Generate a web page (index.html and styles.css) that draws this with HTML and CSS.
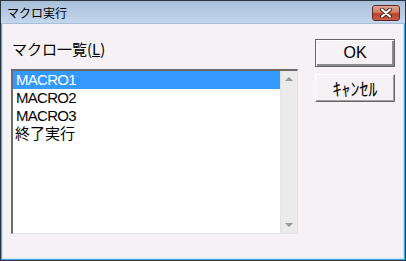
FILE: index.html
```html
<!DOCTYPE html>
<html lang="ja">
<head>
    <meta charset="UTF-8">
    <title>マクロ実行</title>
    <link rel="stylesheet" href="styles.css">
</head>
<body>
    <div class="window">
        <div class="titlebar">
            <span class="title">マクロ実行</span>
            <button class="close" aria-label="閉じる">
                <svg width="14" height="10" viewBox="0 0 14 10">
                    <path d="M3 1.5 L11 8.5 M11 1.5 L3 8.5" stroke="#4a1f1a" stroke-width="4" stroke-linecap="round"/>
                    <path d="M3 1.5 L11 8.5 M11 1.5 L3 8.5" stroke="#ffffff" stroke-width="2.2" stroke-linecap="round"/>
                </svg>
            </button>
        </div>
        <div class="frame">
            <div class="client">
                <div class="left">
                    <div class="label">マクロ一覧(<u>L</u>)</div>
                    <div class="listbox">
                        <ul class="items">
                            <li class="selected">MACRO1</li>
                            <li>MACRO2</li>
                            <li>MACRO3</li>
                            <li class="jp">終了実行</li>
                        </ul>
                        <div class="scrollbar">
                            <span class="arrow up"></span>
                            <span class="arrow down"></span>
                        </div>
                    </div>
                </div>
                <div class="buttons">
                    <button class="btn default">OK</button>
                    <button class="btn kana">ｷｬﾝｾﾙ</button>
                </div>
            </div>
        </div>
    </div>
</body>
</html>
```

FILE: styles.css
```css
* {
    box-sizing: border-box;
}

body {
    margin: 0;
    font-family: "Noto Sans CJK JP", "Noto Sans", sans-serif;
    color: #000;
}

.window {
    width: 406px;
    height: 261px;
    border: 1px solid #2a3542;
    background: linear-gradient(#a8bfd9, #c3d7ed 22px);
    display: flex;
    flex-direction: column;
}

.titlebar {
    height: 22px;
    display: flex;
    justify-content: space-between;
    align-items: flex-start;
    padding: 4px 5px 0 6px;
}

.title {
    font-size: 12px;
    line-height: 14px;
    margin-top: 1px;
}

.close {
    width: 28px;
    height: 16px;
    padding: 0;
    border: 1px solid #5b2a24;
    border-radius: 3px;
    background: linear-gradient(#e2a595, #d27a63 45%, #b9432b 55%, #c9604a);
    display: flex;
    align-items: center;
    justify-content: center;
}

.frame {
    flex: 1;
    border: 1px solid #39ade6;
    border-top: none;
}

.client {
    height: 100%;
    border: 1px solid #d3e2f1;
    border-top: 1px solid #a9bfd8;
    background: #f5f1f5;
    display: flex;
    padding: 15px 0 0 8px;
}

.left {
    width: 287px;
}

.label {
    font-size: 15px;
    line-height: 18px;
    margin: 1px 0 11px;
    padding-left: 1px;
}

.listbox {
    height: 165px;
    display: flex;
    background: #fff;
    border-top: 2px solid #6b6b6b;
    border-left: 2px solid #6b6b6b;
    border-right: 1px solid #e3e3e3;
    border-bottom: 1px solid #e3e3e3;
}

.items {
    flex: 1;
    list-style: none;
    margin: 0;
    padding: 0;
}

.items li {
    height: 18px;
    line-height: 18px;
    font-family: "Liberation Sans", "Noto Sans CJK JP", sans-serif;
    font-size: 15px;
    letter-spacing: -0.7px;
    padding-left: 3px;
}

.items li.jp {
    letter-spacing: 0;
    padding-left: 2px;
}

.items li.selected {
    background: #3399ff;
    color: #fff;
}

.scrollbar {
    width: 17px;
    background: #ebebeb;
    border-left: 1px solid #e2e2e2;
    display: flex;
    flex-direction: column;
    justify-content: space-between;
    align-items: center;
    padding: 6px 0 6px;
}

.arrow {
    width: 0;
    height: 0;
    border-left: 4px solid transparent;
    border-right: 4px solid transparent;
}

.arrow.up {
    border-bottom: 4px solid #9a9a9a;
}

.arrow.down {
    border-top: 4px solid #9a9a9a;
}

.buttons {
    width: 80px;
    margin-left: 17px;
    display: flex;
    flex-direction: column;
    gap: 7px;
}

.btn {
    height: 28px;
    padding: 0;
    font-family: inherit;
    font-size: 15px;
    color: #000;
    background: #f5f1f5;
    border: 1px solid;
    border-color: #ffffff #696969 #696969 #ffffff;
    box-shadow: inset -1px -1px 0 #a0a0a0;
}

.btn.kana {
    font-size: 18px;
    line-height: 20px;
}

.btn.default {
    font-family: "Liberation Sans", sans-serif;
    font-size: 16px;
    border: 1px solid #646464;
    box-shadow: inset 1px 1px 0 #ffffff, inset -2px -2px 0 #8a8a8a;
}
```
